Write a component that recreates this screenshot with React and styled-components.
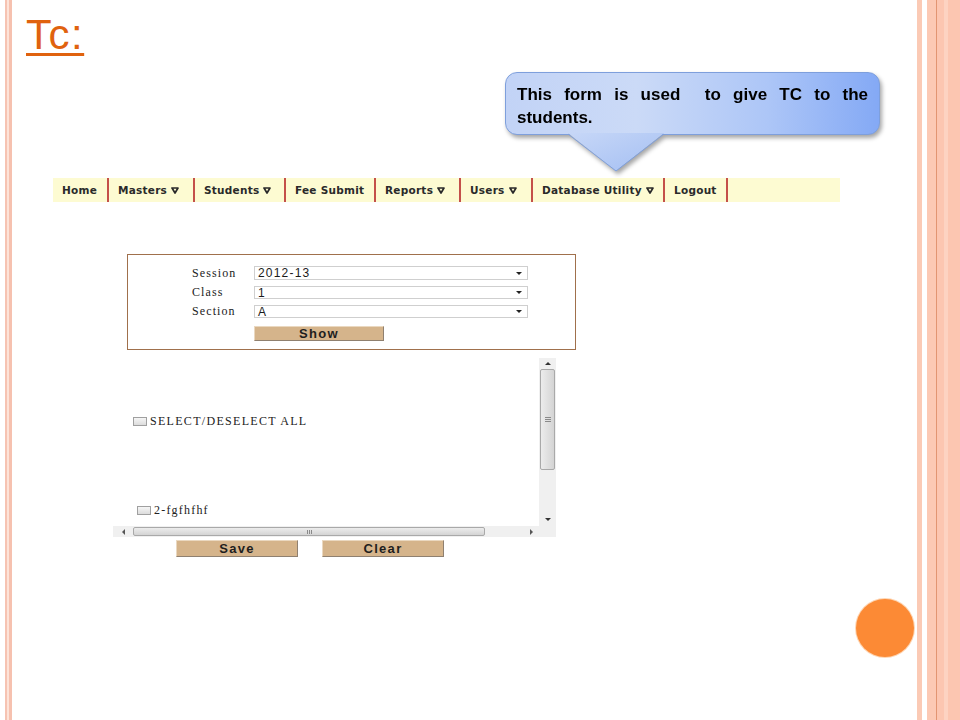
import React from 'react';
import styled, { createGlobalStyle } from 'styled-components';

const GlobalStyle = createGlobalStyle`
  html, body { margin: 0; padding: 0; background: #fff; }
  body { width: 960px; height: 720px; overflow: hidden; }
  #root { width: 960px; height: 720px; }
`;

const Slide = styled.div`
  position: relative;
  width: 960px;
  height: 720px;
  box-sizing: border-box;
  display: flex;
  flex-direction: column;
  align-items: flex-start;
  font-family: "Liberation Sans", Arial, sans-serif;
  background: linear-gradient(
    90deg,
    #fff 0 5px,
    #f6c3b2 5px 7px,
    #fde3d8 7px 9px,
    #f6c1af 9px 12px,
    #fff 12px 917px,
    #fbcab5 917px 922px,
    #fff 922px 927px,
    #fcc9b4 927px 936px,
    #e29572 936px 937px,
    #fcc6b1 937px 944px,
    #fdd3c2 944px 948px,
    #fcc6b1 948px 960px
  );
`;

const Title = styled.h1`
  margin: 11px 0 0 26px;
  font-family: "Liberation Sans", Arial, sans-serif;
  font-weight: normal;
  font-size: 42px;
  line-height: 48px;
  letter-spacing: 1.5px;
  color: #e0620e;
  text-decoration: underline;
  text-decoration-thickness: 3px;
  text-underline-offset: 4px;
`;

const Callout = styled.div`
  position: relative;
  margin: 13px 0 0 505px;
  width: 375px;
  height: 63px;
  box-sizing: border-box;
  padding: 10px 11px 0 11px;
  border: 1px solid #7e9fdc;
  border-radius: 12px;
  background: linear-gradient(90deg, #c2d3f6 0%, #cbdaf7 35%, #adc6f7 70%, #84a9f5 100%);
  filter: drop-shadow(2px 3px 2px rgba(0, 0, 0, 0.35));
  font-family: "Liberation Sans", Arial, sans-serif;
  font-weight: bold;
  font-size: 17px;
  line-height: 23px;
  color: #000;
  text-align: justify;
  text-align-last: left;
`;

const Pointer = styled.svg`
  position: absolute;
  left: 62px;
  top: 60px;
  overflow: visible;
`;

const Nav = styled.nav`
  margin: 43px 0 0 53px;
  width: 787px;
  height: 24px;
  display: flex;
  background: #fdfbd2;
`;

const NavItem = styled.div`
  width: ${(p) => p.$w}px;
  box-sizing: border-box;
  display: flex;
  align-items: center;
  gap: 4px;
  padding-left: 9px;
  border-right: 2px solid #c4504a;
  font-family: "DejaVu Sans", Verdana, sans-serif;
  font-weight: bold;
  font-size: 10.5px;
  letter-spacing: 0.25px;
  color: #2a2a2a;
  white-space: nowrap;
`;

const Caret = () => (
  <svg width="8" height="7" viewBox="0 0 8 7">
    <path d="M1 1 H7 L4 6 Z" fill="none" stroke="#2a2a2a" strokeWidth="1.7" strokeLinejoin="round" />
  </svg>
);

const FormBox = styled.div`
  margin: 52px 0 0 127px;
  width: 449px;
  height: 96px;
  box-sizing: border-box;
  border: 1px solid #a0704c;
  padding: 11px 0 8px 64px;
  display: grid;
  grid-template-columns: 62px 274px;
  grid-template-rows: 14px 13px 13px 17px;
  row-gap: 6px;
  align-items: center;
`;

const Label = styled.span`
  font-family: "Liberation Serif", "Times New Roman", serif;
  font-size: 12px;
  letter-spacing: 1.1px;
  color: #222;
`;

const SelectBox = styled.div`
  height: 100%;
  box-sizing: border-box;
  display: flex;
  align-items: center;
  justify-content: space-between;
  padding: 0 5px 0 3px;
  border: 1px solid #cfcfcf;
  background: #fff;
  font-family: "Liberation Sans", Arial, sans-serif;
  font-size: 12px;
  letter-spacing: 1.2px;
  color: #1a1a1a;
`;

const SelectArrow = styled.span`
  width: 0;
  height: 0;
  border-left: 3px solid transparent;
  border-right: 3px solid transparent;
  border-top: 3px solid #222;
`;

const TanButton = styled.button`
  width: ${(p) => p.$w}px;
  height: ${(p) => p.$h}px;
  box-sizing: border-box;
  padding: 0;
  display: flex;
  align-items: center;
  justify-content: center;
  background: #d5b48b;
  border: 1px solid;
  border-color: #ead8c0 #8f8070 #8f8070 #ead8c0;
  font-family: "Liberation Sans", Arial, sans-serif;
  font-weight: bold;
  font-size: 13px;
  letter-spacing: 1.3px;
  color: #1e1e1e;
`;

const ShowCell = styled.div`
  grid-column: 2;
  align-self: end;
`;

const ScrollArea = styled.div`
  margin: 8px 0 0 113px;
  width: 443px;
  display: grid;
  grid-template-columns: 426px 17px;
  grid-template-rows: 168px 11px;
`;

const ScrollContent = styled.div`
  display: flex;
  flex-direction: column;
  padding-top: 57px;
  background: #fff;
`;

const CheckRow = styled.label`
  display: flex;
  align-items: center;
  gap: 3px;
  margin-top: ${(p) => p.$top || 0}px;
  padding-left: ${(p) => p.$indent}px;
  font-family: "Liberation Serif", "Times New Roman", serif;
  font-size: 12px;
  line-height: 12px;
  letter-spacing: ${(p) => p.$ls}px;
  color: #222;
`;

const Checkbox = styled.span`
  width: 14px;
  height: 9px;
  box-sizing: border-box;
  border: 1px solid #a0a0a0;
  background: linear-gradient(#f6f6f6, #dcdcdc);
`;

const VScroll = styled.div`
  display: flex;
  flex-direction: column;
  align-items: center;
  background: #f0f0f0;
`;

const HScroll = styled.div`
  display: flex;
  align-items: center;
  background: #f0f0f0;
`;

const ArrowCell = styled.div`
  width: ${(p) => p.$w}px;
  height: ${(p) => p.$h}px;
  display: flex;
  align-items: center;
  justify-content: center;
  flex: none;
`;

const Tri = styled.span`
  width: 0;
  height: 0;
  ${(p) =>
    p.$dir === 'up'
      ? 'border-left:3px solid transparent;border-right:3px solid transparent;border-bottom:3px solid #333;'
      : p.$dir === 'down'
      ? 'border-left:3px solid transparent;border-right:3px solid transparent;border-top:3px solid #333;'
      : p.$dir === 'left'
      ? 'border-top:3px solid transparent;border-bottom:3px solid transparent;border-right:3px solid #555;'
      : 'border-top:3px solid transparent;border-bottom:3px solid transparent;border-left:3px solid #555;'}
`;

const Thumb = styled.div`
  box-sizing: border-box;
  width: ${(p) => p.$w}px;
  height: ${(p) => p.$h}px;
  border: 1px solid #a9a9a9;
  border-radius: 2px;
  background: ${(p) =>
    p.$vertical
      ? 'linear-gradient(90deg, #ececec, #d4d4d4)'
      : 'linear-gradient(#ececec, #d4d4d4)'};
  display: flex;
  flex-direction: ${(p) => (p.$vertical ? 'column' : 'row')};
  align-items: center;
  justify-content: center;
  gap: 1px;
  flex: none;
`;

const Grip = styled.span`
  background: #8a8a8a;
  ${(p) => (p.$vertical ? 'width:6px;height:1px;' : 'width:1px;height:4px;')}
`;

const Spacer = styled.div`
  flex: 1;
`;

const Corner = styled.div`
  background: #f0f0f0;
`;

const Actions = styled.div`
  margin: 3px 0 0 176px;
  display: flex;
  gap: 24px;
`;

const Dot = styled.div`
  position: absolute;
  left: 856px;
  top: 599px;
  width: 58px;
  height: 58px;
  border-radius: 50%;
  background: #fc8a35;
  box-shadow: 0 0 0 1px #fed6b4;
`;

const navItems = [
  { label: 'Home', w: 56 },
  { label: 'Masters', w: 86, caret: true },
  { label: 'Students', w: 91, caret: true },
  { label: 'Fee Submit', w: 90 },
  { label: 'Reports', w: 85, caret: true },
  { label: 'Users', w: 72, caret: true },
  { label: 'Database Utility', w: 132, caret: true },
  { label: 'Logout', w: 63 },
];

const fields = [
  { label: 'Session', value: '2012-13' },
  { label: 'Class', value: '1' },
  { label: 'Section', value: 'A' },
];

export default function App() {
  return (
    <>
      <GlobalStyle />
      <Slide>
        <Title>Tc:</Title>

        <Callout>
          This form is used{'\u00a0'} to give TC to the students.
          <Pointer width="96" height="40" viewBox="0 0 96 40">
            <defs>
              <linearGradient id="pg" x1="0" y1="0" x2="1" y2="1">
                <stop offset="0" stopColor="#c7d7f7" />
                <stop offset="1" stopColor="#a4bff3" />
              </linearGradient>
            </defs>
            <path d="M0 0 L96 0 L48 38 Z" fill="url(#pg)" />
            <path d="M0 1 L48 38 L96 1" fill="none" stroke="#7e9fdc" strokeWidth="1" />
          </Pointer>
        </Callout>

        <Nav>
          {navItems.map((it) => (
            <NavItem key={it.label} $w={it.w}>
              {it.label}
              {it.caret && <Caret />}
            </NavItem>
          ))}
        </Nav>

        <FormBox>
          {fields.map((f) => (
            <React.Fragment key={f.label}>
              <Label>{f.label}</Label>
              <SelectBox>
                <span>{f.value}</span>
                <SelectArrow />
              </SelectBox>
            </React.Fragment>
          ))}
          <ShowCell>
            <TanButton $w={130} $h={15}>Show</TanButton>
          </ShowCell>
        </FormBox>

        <ScrollArea>
          <ScrollContent>
            <CheckRow $indent={20} $ls={1.3}>
              <Checkbox />
              SELECT/DESELECT ALL
            </CheckRow>
            <CheckRow $indent={24} $top={77} $ls={1.2}>
              <Checkbox />
              2-fgfhfhf
            </CheckRow>
          </ScrollContent>
          <VScroll>
            <ArrowCell $w={17} $h={11}>
              <Tri $dir="up" />
            </ArrowCell>
            <Thumb $vertical $w={15} $h={101}>
              <Grip $vertical />
              <Grip $vertical />
              <Grip $vertical />
            </Thumb>
            <Spacer />
            <ArrowCell $w={17} $h={14}>
              <Tri $dir="down" />
            </ArrowCell>
          </VScroll>
          <HScroll>
            <ArrowCell $w={20} $h={11}>
              <Tri $dir="left" />
            </ArrowCell>
            <Thumb $w={352} $h={9}>
              <Grip />
              <Grip />
              <Grip />
            </Thumb>
            <Spacer />
            <ArrowCell $w={16} $h={11}>
              <Tri $dir="right" />
            </ArrowCell>
          </HScroll>
          <Corner />
        </ScrollArea>

        <Actions>
          <TanButton $w={122} $h={17}>Save</TanButton>
          <TanButton $w={122} $h={17}>Clear</TanButton>
        </Actions>

        <Dot />
      </Slide>
    </>
  );
}
